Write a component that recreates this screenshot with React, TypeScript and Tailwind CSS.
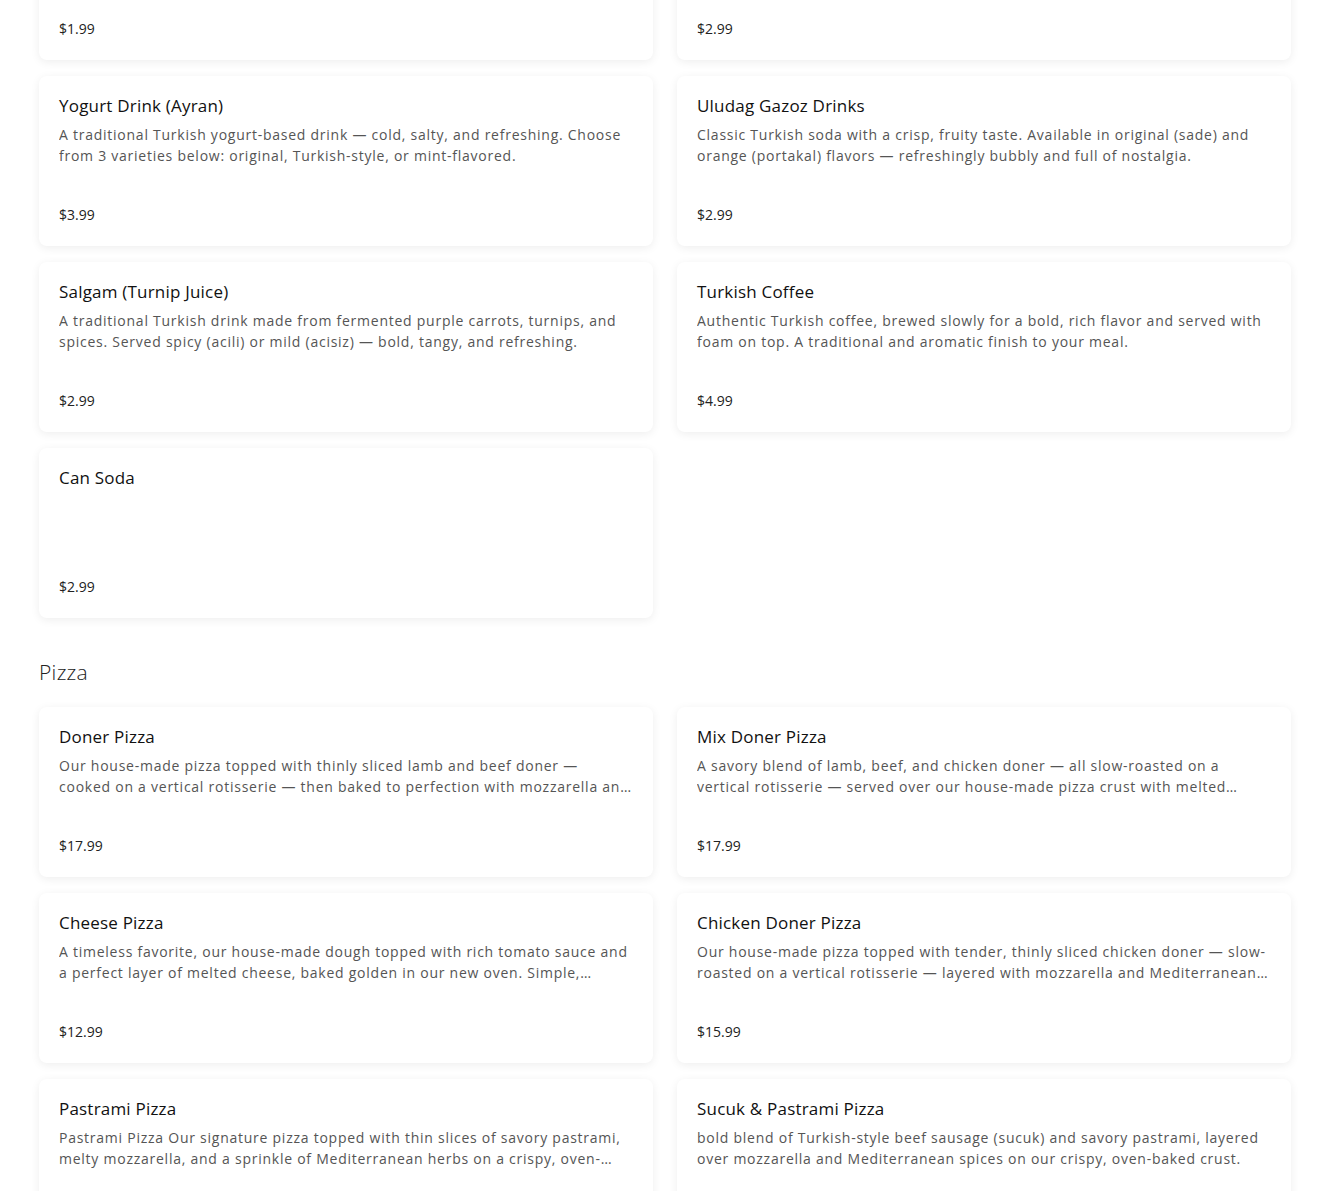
import React from 'react';

interface MenuItem {
    name: string;
    description?: string;
    price: string;
}

const drinks: MenuItem[] = [
    { name: 'Bottled Water', description: 'Chilled spring water.', price: '$1.99' },
    { name: 'Snapple', description: 'Assorted flavors.', price: '$2.99' },
    { name: 'Yogurt Drink (Ayran)', description: 'A traditional Turkish yogurt-based drink — cold, salty, and refreshing. Choose from 3 varieties below: original, Turkish-style, or mint-flavored.', price: '$3.99' },
    { name: 'Uludag Gazoz Drinks', description: 'Classic Turkish soda with a crisp, fruity taste. Available in original (sade) and orange (portakal) flavors — refreshingly bubbly and full of nostalgia.', price: '$2.99' },
    { name: 'Salgam (Turnip Juice)', description: 'A traditional Turkish drink made from fermented purple carrots, turnips, and spices. Served spicy (acili) or mild (acisiz) — bold, tangy, and refreshing.', price: '$2.99' },
    { name: 'Turkish Coffee', description: 'Authentic Turkish coffee, brewed slowly for a bold, rich flavor and served with foam on top. A traditional and aromatic finish to your meal.', price: '$4.99' },
    { name: 'Can Soda', price: '$2.99' },
];

const pizzas: MenuItem[] = [
    { name: 'Doner Pizza', description: 'Our house-made pizza topped with thinly sliced lamb and beef doner — cooked on a vertical rotisserie — then baked to perfection with mozzarella and Mediterranean spices.', price: '$17.99' },
    { name: 'Mix Doner Pizza', description: 'A savory blend of lamb, beef, and chicken doner — all slow-roasted on a vertical rotisserie — served over our house-made pizza crust with melted mozzarella and spices.', price: '$17.99' },
    { name: 'Cheese Pizza', description: 'A timeless favorite, our house-made dough topped with rich tomato sauce and a perfect layer of melted cheese, baked golden in our new oven. Simple, satisfying, and delicious.', price: '$12.99' },
    { name: 'Chicken Doner Pizza', description: 'Our house-made pizza topped with tender, thinly sliced chicken doner — slow-roasted on a vertical rotisserie — layered with mozzarella and Mediterranean spices on a crispy crust.', price: '$15.99' },
    { name: 'Pastrami Pizza', description: 'Pastrami Pizza Our signature pizza topped with thin slices of savory pastrami, melty mozzarella, and a sprinkle of Mediterranean herbs on a crispy, oven-baked crust.', price: '$16.99' },
    { name: 'Sucuk & Pastrami Pizza', description: 'bold blend of Turkish-style beef sausage (sucuk) and savory pastrami, layered over mozzarella and Mediterranean spices on our crispy, oven-baked crust.', price: '$17.99' },
];

const ItemCard: React.FC<{ item: MenuItem }> = ({ item }) => (
    <div className="bg-white rounded-lg shadow-[0_2px_10px_rgba(0,0,0,0.07)] h-[170px] px-5 pt-[18px] pb-[21px] flex flex-col">
        <h3 className="text-[17px] leading-6 text-[#111] tracking-[0.2px]">{item.name}</h3>
        {item.description && (
            <p className="mt-[6px] text-[14px] leading-[21px] text-[#555] tracking-[0.75px] line-clamp-2">{item.description}</p>
        )}
        <p className="mt-auto text-[14px] leading-5 text-[#222]">{item.price}</p>
    </div>
);

export default function App() {
    return (
        <div className="bg-white min-h-screen px-[39px] pb-10" style={{ fontFamily: '"Open Sans", "Noto Sans", sans-serif' }}>
            <div className="-mt-[110px] grid grid-cols-2 gap-x-6 gap-y-4">
                {drinks.map((item, i) => <ItemCard key={i} item={item} />)}
            </div>

            <h2 className="mt-[40px] mb-[21px] text-[21px] leading-7 font-light text-[#222] tracking-[0.3px]">Pizza</h2>

            <div className="grid grid-cols-2 gap-x-6 gap-y-4">
                {pizzas.map((item, i) => <ItemCard key={i} item={item} />)}
            </div>
        </div>
    );
}
